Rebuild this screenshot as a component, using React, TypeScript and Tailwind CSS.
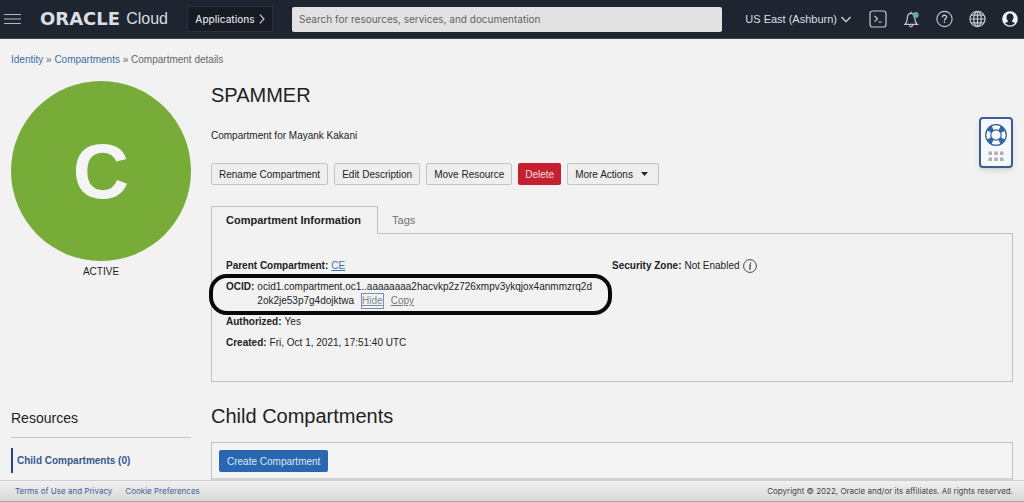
import type { ReactNode } from "react";

const actions = ["Rename Compartment", "Edit Description", "Move Resource"];

const HelpWidget = () => (
  <button
    aria-label="Help"
    className="absolute right-[11px] top-[117px] flex h-[51px] w-[34px] flex-col items-center rounded-[4px] border-2 border-[#3c5e92] bg-[#f5f9fd] pt-1 shadow-md"
  >
    <svg width="24" height="24" viewBox="0 0 24 24" fill="none">
      <circle cx="12" cy="12" r="7.5" stroke="#fff" strokeWidth="6" />
      <circle
        cx="12"
        cy="12"
        r="7.7"
        stroke="#2d69ad"
        strokeWidth="5.4"
        strokeDasharray="5 7.1"
        strokeDashoffset="-3.5"
      />
      <circle cx="12" cy="12" r="10.3" stroke="#2d5f9e" strokeWidth="1.2" />
      <circle cx="12" cy="12" r="5.2" stroke="#2d5f9e" strokeWidth="1.2" />
    </svg>
    <svg width="16" height="12" viewBox="0 0 16 12" fill="#aeaeae" className="mt-1">
      <rect x="0.5" y="0.5" width="3.5" height="3.5" />
      <rect x="6.3" y="0.5" width="3.5" height="3.5" />
      <rect x="12" y="0.5" width="3.5" height="3.5" />
      <rect x="0.5" y="6.500" width="3.5" height="3.5" />
      <rect x="6.3" y="6.500" width="3.5" height="3.5" />
      <rect x="12" y="6.500" width="3.5" height="3.5" />
    </svg>
  </button>
);

const Header = () => (
  <header className="flex h-[39px] shrink-0 items-center border-b border-[#4a4247] bg-[#1e2531] pl-1 pr-[6px] font-['Inter',sans-serif] text-[#dcdee1]">
    <button aria-label="Menu">
      <svg width="17" height="12" viewBox="0 0 17 12" stroke="#b4b8be" strokeWidth="1.2">
        <path d="M0 1.5h17M0 6h17M0 10.5h17" />
      </svg>
    </button>
    <a href="#" className="ml-[19px] flex w-[128px] items-center justify-between leading-5">
      <span className="font-['DejaVu_Sans',sans-serif] text-[18px] font-bold">ORACLE</span>
      <span className="font-['Liberation_Sans',sans-serif] text-[16px]">Cloud</span>
    </a>
    <button className="ml-[19px] flex h-[26px] w-[86px] shrink-0 items-center justify-center gap-1 border border-[#2b313b] bg-[#161b24] text-[10px] font-medium">
      Applications
      <svg width="6" height="10" viewBox="0 0 6 10" fill="none" stroke="#c9ccd1" strokeWidth="1.2">
        <path d="M.8.7 5 5 .8 9.3" />
      </svg>
    </button>
    <input
      type="text"
      aria-label="Search"
      placeholder="Search for resources, services, and documentation"
      className="ml-[19px] mr-[23px] h-[25px] min-w-0 flex-1 rounded-[2px] bg-[#e2e2e3] px-[7px] text-[10px] text-[#333] placeholder:text-[#606265] placeholder:opacity-100"
    />
    <button className="flex shrink-0 items-center gap-1 font-['Liberation_Sans',sans-serif] text-[11px]">
      US East (Ashburn)
      <svg width="10" height="7" viewBox="0 0 10 7" fill="none" stroke="#dcdee1" strokeWidth="1.3">
        <path d="M.5 1 5 5.6 9.5 1" />
      </svg>
    </button>
    <div className="ml-[18px] flex shrink-0 items-center gap-4">
      <button aria-label="Cloud Shell">
        <svg width="18" height="18" viewBox="0 0 18 18" fill="none" stroke="#c4c7cb" strokeWidth="1.2">
          <rect x="1" y="1" width="16" height="16" rx="2.5" />
          <path d="m5.5 6 3 2.8-3 2.8M9.3 12h3.5" />
        </svg>
      </button>
      <button aria-label="Announcements">
        <svg width="17" height="18" viewBox="0 0 17 18" fill="none" stroke="#c4c7cb" strokeWidth="1.2">
          <path d="M1 14.3h14.5M2.5 14c1.6-1.7 1.7-3.6 1.8-6C4.4 5 5.8 3.3 8 3.3S11.7 5 11.8 8c.1 2.4.3 4.3 2 6M8 3.3V1.5M6.5 15c.2 2.5 2.9 2.5 3.1 0" />
          <circle cx="12.7" cy="5" r="3" fill="#5fae9f" stroke="none" />
        </svg>
      </button>
      <button aria-label="Help menu">
        <svg width="17" height="18" viewBox="0 0 17 18" fill="none" stroke="#c4c7cb" strokeWidth="1.1">
          <circle cx="8.5" cy="9" r="7.6" />
          <path d="M6.4 7.3c0-2.7 4.2-2.7 4.2-.2 0 1.6-2.1 1.5-2.1 3.3M8.5 11.6v1.5" strokeWidth="1.4" />
        </svg>
      </button>
      <button aria-label="Language">
        <svg width="17" height="18" viewBox="0 0 18 18" fill="none" stroke="#c4c7cb" strokeWidth="1.3">
          <circle cx="9" cy="9" r="8" />
          <ellipse cx="9" cy="9" rx="4" ry="8" />
          <path d="M9 1v16M1 9h16M2.2 5h13.6M2.2 13h13.6" />
        </svg>
      </button>
      <button aria-label="Profile">
        <svg width="16" height="18" viewBox="0 0 16 18">
          <circle cx="8" cy="9" r="7.8" fill="#f2f2f2" />
          <path
            d="M8 3.5c-2.4 0-3.6 1.7-3.5 4 .1 1.6.8 2.7 1.5 3.4-.1 1.3-1.5 1.2-3 2.2 2.4 3.1 7.6 3.1 10 0-1.5-1-2.9-.9-3-2.2.7-.7 1.4-1.8 1.5-3.4.1-2.3-1.1-4-3.5-4Z"
            fill="#1e2531"
          />
        </svg>
      </button>
    </div>
  </header>
);

const Detail = ({ label, children }: { label: string; children: ReactNode }) => (
  <div className="flex gap-[3px]">
    <dt className="shrink-0 font-bold">{label}:</dt>
    <dd className="min-w-0">{children}</dd>
  </div>
);

const CompartmentInfo = () => (
  <section>
    <div role="tablist" className="relative z-10 -mb-px flex h-7 text-[11px]">
      <button
        role="tab"
        aria-selected="true"
        className="border border-b-0 border-[#bfc1c2] bg-[#f2f2f2] pl-[14px] pr-4 font-bold"
      >
        Compartment Information
      </button>
      <button role="tab" aria-selected="false" className="px-[14px] text-[#6f6f6f]">
        Tags
      </button>
    </div>
    <div className="grid h-[149px] grid-cols-2 border border-[#bfc1c2] px-[14px] pt-[25px] leading-[14px]">
      <dl className="flex flex-col gap-[7px]">
        <Detail label="Parent Compartment">
          <a href="#" className="text-[#3b73b5] underline">CE</a>
        </Detail>
        <div className="relative">
          <Detail label="OCID">
            ocid1.compartment.oc1..aaaaaaaa2hacvkp2z726xmpv3ykqjox4anmmzrq2d
            <br />
            2ok2je53p7g4dojktwa
            <button className="ml-2 text-[#858a92] underline outline outline-[#6f93c8]">Hide</button>
            <button className="ml-2 text-[#777] underline">Copy</button>
          </Detail>
          {/* highlight around the OCID */}
          <div className="pointer-events-none absolute -bottom-[7px] -left-[17px] -top-[6px] right-0 rounded-[18px] border-4 border-[#090909]" />
        </div>
        <Detail label="Authorized">Yes</Detail>
        <Detail label="Created">Fri, Oct 1, 2021, 17:51:40 UTC</Detail>
      </dl>
      <dl>
        <Detail label="Security Zone">
          <span className="flex items-center gap-[3px]">
            Not Enabled
            <svg width="14" height="14" viewBox="0 0 14 14" fill="none" stroke="#444" aria-label="Info">
              <circle cx="7" cy="7" r="6.4" strokeWidth="1" />
              <path d="M6 6h1.4L6.6 10h1.2M7.6 3.6v1.2" strokeWidth="1.2" />
            </svg>
          </span>
        </Detail>
      </dl>
    </div>
  </section>
);

export default function App() {
  return (
    <div className="relative flex h-screen flex-col overflow-hidden bg-[#f2f2f2] font-['Liberation_Sans',Arial,sans-serif] text-[10px] text-[#222]">
      <Header />

      <main className="min-h-0 flex-1 overflow-hidden px-[11px] pt-[14px]">
        <nav aria-label="Breadcrumb" className="leading-[14px] text-[#666]">
          <a href="#" className="text-[#3b6ea5]">Identity</a> »{" "}
          <a href="#" className="text-[#3b6ea5]">Compartments</a> » Compartment details
        </nav>

        <div className="mt-[14px] grid grid-cols-[180px_minmax(0,1fr)] gap-x-5">
          <div className="text-center">
            <div className="flex h-[180px] items-center justify-center rounded-full bg-[#77ac38] text-[78px] font-bold text-[#f4f4f4]">
              C
            </div>
            <p className="mt-1 leading-[14px]">ACTIVE</p>
          </div>

          <div>
            <h1 className="text-[20px] leading-7">SPAMMER</h1>
            <p className="mt-5 leading-[14px]">Compartment for Mayank Kakani</p>
            <div className="mb-[21px] mt-5 flex gap-[6px]">
              {actions.map((action) => (
                <button
                  key={action}
                  className="h-[22px] rounded-[2px] border border-[#c4c4c4] bg-[#eeeeee] px-[7px]"
                >
                  {action}
                </button>
              ))}
              <button className="h-[22px] rounded-[2px] bg-[#c4202f] px-[7px] text-[#f4dfe1]">Delete</button>
              <button className="flex h-[22px] items-center gap-2 rounded-[2px] border border-[#c4c4c4] bg-[#eeeeee] pl-[7px] pr-[10px]">
                More Actions
                <svg width="7" height="4" viewBox="0 0 7 4" fill="#222">
                  <path d="M0 0h7L3.5 4Z" />
                </svg>
              </button>
            </div>
            <CompartmentInfo />
          </div>

          <aside className="mt-6">
            <h2 className="border-b border-[#c4c6c7] pb-[7px] text-[14px] leading-6">Resources</h2>
            <a
              href="#"
              className="mt-[10px] flex h-[25px] items-center border-l-2 border-[#27477c] pl-1 font-bold text-[#33598f]"
            >
              Child Compartments (0)
            </a>
          </aside>

          <section className="mt-5">
            <h2 className="text-[20px] leading-7">Child Compartments</h2>
            <div className="mt-3 border border-[#bfc1c2] bg-[#f4f4f4] p-[7px]">
              <button className="h-[22px] rounded-[2px] bg-[#2a67b1] px-2 text-[#dbe8f7]">
                Create Compartment
              </button>
              <div className="-mx-[7px] mt-[6px] h-10 border-t-2 border-[#d4d4d4]" />
            </div>
          </section>
        </div>
      </main>

      <footer className="flex h-[22px] shrink-0 items-center gap-[13px] border-b border-t border-b-[#a3a3a3] border-t-[#d0d0d0] bg-linear-to-b from-[#f0f0f0] to-[#d9d9d9] pl-[15px] pr-[11px] font-['Inter',sans-serif] text-[8px]">
        <a href="#" className="text-[#3c6396]">Terms of Use and Privacy</a>
        <a href="#" className="text-[#3c6396]">Cookie Preferences</a>
        <span className="ml-auto text-[#444]">
          Copyright © 2022, Oracle and/or its affiliates. All rights reserved.
        </span>
      </footer>

      <HelpWidget />
    </div>
  );
}
